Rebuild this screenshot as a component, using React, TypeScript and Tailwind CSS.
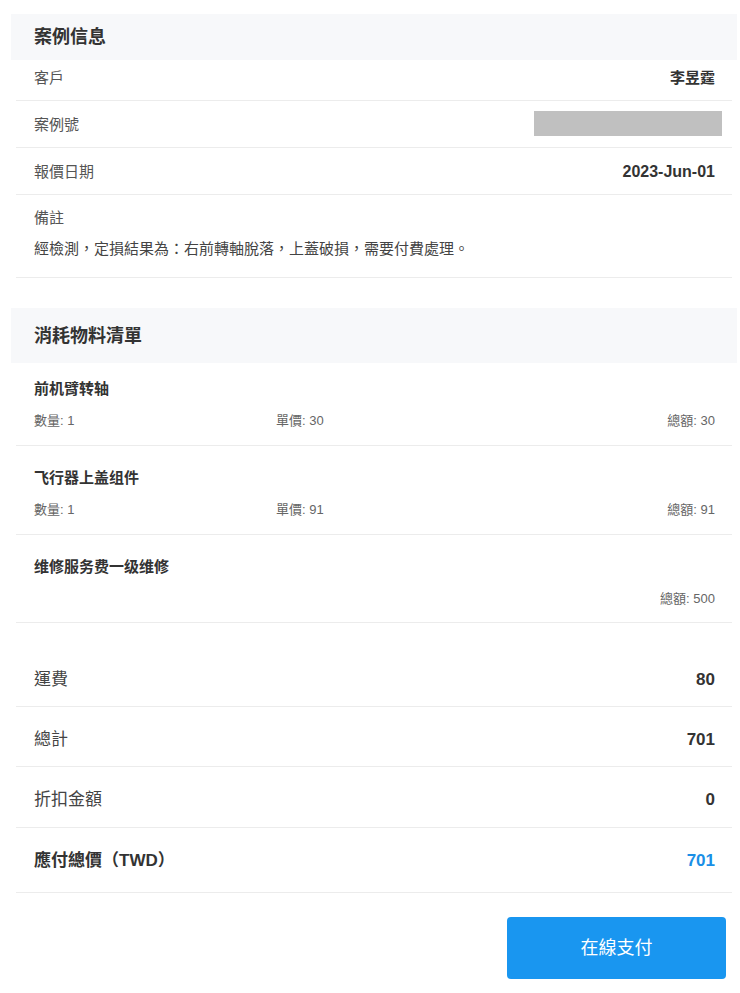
import React from "react";

const font = {
  fontFamily: '"Liberation Sans", "Noto Sans CJK TC", sans-serif',
};

function InfoRow({
  children,
  className,
}: {
  children: React.ReactNode;
  className: string;
}) {
  return (
    <div
      className={`ml-[16px] w-[716px] border-b border-[#ececec] pl-[18px] pr-[17px] ${className}`}
    >
      {children}
    </div>
  );
}

function Item({
  name,
  qty,
  price,
  total,
  first,
  last,
}: {
  name: string;
  qty?: string;
  price?: string;
  total: string;
  first?: boolean;
  last?: boolean;
}) {
  return (
    <div
      className={`ml-[16px] w-[716px] border-b border-[#ececec] pl-[18px] pr-[17px] ${
        first ? "pt-[14px]" : "pt-[20px]"
      } ${last ? "pb-[13px]" : "pb-[14px]"}`}
    >
      <div className="text-[15px] leading-[24px] font-semibold text-[#333]">
        {name}
      </div>
      <div className="mt-[10px] flex h-[20px] items-center text-[13px] leading-[20px] text-[#666]">
        <div className="w-[242px]">{qty ? `數量: ${qty}` : ""}</div>
        <div className="flex-1">{price ? `單價: ${price}` : ""}</div>
        <div>總額: {total}</div>
      </div>
    </div>
  );
}

function SumRow({
  label,
  value,
  highlight,
  pb,
}: {
  label: string;
  value: string;
  highlight?: boolean;
  pb: string;
}) {
  return (
    <div
      className={`ml-[16px] flex w-[716px] items-center justify-between border-b border-[#ececec] pl-[18px] pr-[17px] pt-[21px] ${pb}`}
    >
      <div
        className={`text-[17px] leading-[24px] ${
          highlight ? "font-bold text-[#333]" : "text-[#444]"
        }`}
      >
        {label}
      </div>
      <div
        className={`text-[17px] leading-[24px] font-bold ${
          highlight ? "text-[#1a8fe6]" : "text-[#333]"
        }`}
      >
        {value}
      </div>
    </div>
  );
}

export default function App() {
  return (
    <div className="min-h-[993px] w-[740px] bg-white pt-[14px]" style={font}>
      {/* Section 1 */}
      <div className="ml-[11px] flex h-[46px] w-[726px] items-center bg-[#f7f8fa] pl-[23px]">
        <span className="text-[18px] leading-[24px] font-bold text-[#333]">
          案例信息
        </span>
      </div>
      <InfoRow className="flex items-center justify-between pt-[8px] pb-[12px]">
        <span className="text-[15px] leading-[20px] text-[#555]">客戶</span>
        <span className="text-[15px] leading-[20px] font-bold text-[#333]">
          李昱霆
        </span>
      </InfoRow>
      <InfoRow className="flex items-center justify-between pt-[10px] pb-[11px]">
        <span className="mt-[3px] text-[15px] leading-[20px] text-[#555]">
          案例號
        </span>
        <div className="mr-[-7px] h-[25px] w-[188px] bg-[#c0c0c0]" />
      </InfoRow>
      <InfoRow className="flex items-center justify-between pt-[14px] pb-[12px]">
        <span className="text-[15px] leading-[20px] text-[#555]">報價日期</span>
        <span className="text-[16px] leading-[20px] font-bold text-[#333]">
          2023-Jun-01
        </span>
      </InfoRow>
      <InfoRow className="pt-[13px] pb-[18px]">
        <div className="text-[15px] leading-[20px] text-[#555]">備註</div>
        <div className="mt-[11px] text-[15px] leading-[20px] text-[#444]">
          經檢測，定損結果為：右前轉軸脫落，上蓋破損，需要付費處理。
        </div>
      </InfoRow>

      {/* Section 2 */}
      <div className="mt-[30px] ml-[11px] flex h-[55px] w-[726px] items-center bg-[#f7f8fa] pl-[23px]">
        <span className="text-[18px] leading-[24px] font-bold text-[#333]">
          消耗物料清單
        </span>
      </div>
      <Item name="前机臂转轴" qty="1" price="30" total="30" first />
      <Item name="飞行器上盖组件" qty="1" price="91" total="91" />
      <Item name="维修服务费一级维修" total="500" last />

      {/* Summary */}
      <div className="mt-[24px]">
        <SumRow label="運費" value="80" pb="pb-[14px]" />
        <SumRow label="總計" value="701" pb="pb-[14px]" />
        <SumRow label="折扣金額" value="0" pb="pb-[15px]" />
        <SumRow label="應付總價（TWD）" value="701" highlight pb="pb-[19px]" />
      </div>

      <div className="mt-[24px] flex justify-end pr-[14px]">
        <button className="flex h-[62px] w-[219px] items-center justify-center rounded-[4px] bg-[#1996f0] text-[18px] text-white">
          在線支付
        </button>
      </div>
    </div>
  );
}
